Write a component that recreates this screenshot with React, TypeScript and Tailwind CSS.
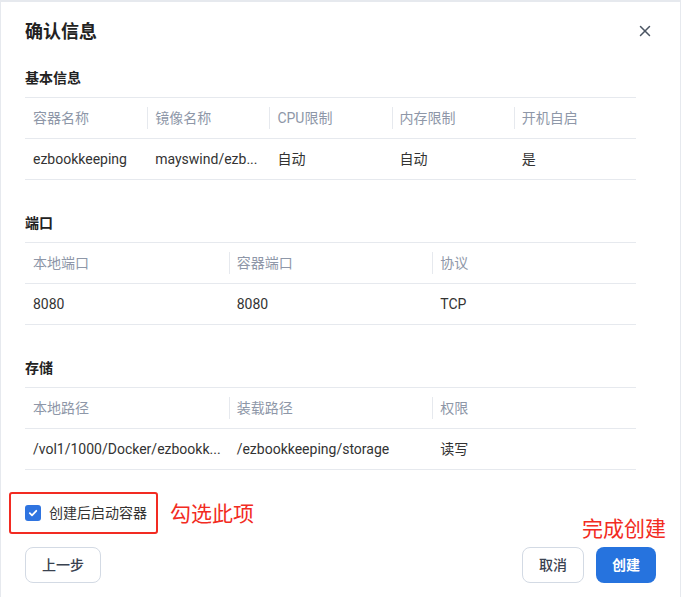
import { X } from "lucide-react";

const font = { fontFamily: 'Roboto, "Noto Sans CJK SC", sans-serif' };

export default function App() {
  return (
    <div
      className="h-[597px] w-[681px] overflow-hidden bg-[#e6e9ee] pt-[2px] px-px"
      style={font}
    >
      <div className="relative h-[595px] bg-white pl-6 pr-6">
        <div className="flex h-[60px] items-center justify-between">
          <h1 className="text-[18px] font-bold leading-[26px] text-[#222]">
            确认信息
          </h1>
          <button className="mr-[2px] mt-[-2px] text-[#4b5563]">
            <X size={18} strokeWidth={2} />
          </button>
        </div>

        <Section
          title="基本信息"
          className="mt-[6px]"
          heads={["容器名称", "镜像名称", "CPU限制", "内存限制", "开机自启"]}
          cells={["ezbookkeeping", "mayswind/ezb...", "自动", "自动", "是"]}
        />
        <Section
          title="端口"
          className="mt-[33px]"
          heads={["本地端口", "容器端口", "协议"]}
          cells={["8080", "8080", "TCP"]}
        />
        <Section
          title="存储"
          className="mt-[33px]"
          heads={["本地路径", "装载路径", "权限"]}
          cells={["/vol1/1000/Docker/ezbookk...", "/ezbookkeeping/storage", "读写"]}
        />

        <div className="mt-[22px] flex items-center">
          <div className="ml-[-16px] flex h-[42px] w-[149px] items-center rounded-[3px] border-2 border-[#f22b22] pl-[14px]">
            <span className="flex h-4 w-4 items-center justify-center rounded-[3px] bg-[#2f74e0]">
              <svg width="10" height="10" viewBox="0 0 10 10" fill="none">
                <path
                  d="M1.8 5.2 L4 7.3 L8.3 2.8"
                  stroke="white"
                  strokeWidth="1.8"
                  strokeLinecap="round"
                  strokeLinejoin="round"
                />
              </svg>
            </span>
            <span className="ml-2 text-[14px] leading-5 text-[#333]">
              创建后启动容器
            </span>
          </div>
          <span className="ml-[12px] mt-[2px] text-[21px] leading-7 text-[#f22b22]">
            勾选此项
          </span>
        </div>

        <span className="absolute right-[14px] top-[513px] text-[21px] leading-7 text-[#f22b22]">
          完成创建
        </span>

        <div className="mt-[13px] flex items-center justify-between">
          <button className="h-9 w-[76px] rounded-lg border border-[#d3dae4] text-[14px] font-medium text-[#3a4250]">
            上一步
          </button>
          <div className="flex gap-3">
            <button className="h-9 w-[62px] rounded-lg border border-[#d3dae4] text-[14px] font-medium text-[#3a4250]">
              取消
            </button>
            <button className="h-9 w-[60px] rounded-lg bg-[#2673de] text-[14px] font-bold text-white">
              创建
            </button>
          </div>
        </div>
      </div>
    </div>
  );
}

function Section({
  title,
  heads,
  cells,
  className,
}: {
  title: string;
  heads: string[];
  cells: string[];
  className: string;
}) {
  const cols = heads.length === 5 ? "grid-cols-5" : "grid-cols-3";
  return (
    <div className={className}>
      <h2 className="h-5 text-[14px] font-bold leading-5 text-[#222]">{title}</h2>
      <div className="mt-[9px] w-[611px] border-t border-[#e6e9ee]">
        <div className={`grid ${cols} h-[41px] border-b border-[#e6e9ee]`}>
          {heads.map((h, i) => (
            <div key={h} className="flex items-center">
              <span
                className={`h-[22px] w-px ${i === 0 ? "bg-transparent" : "bg-[#e6e9ee]"}`}
              />
              <span className="pl-[7px] text-[14px] text-[#8e97a8]">{h}</span>
            </div>
          ))}
        </div>
        <div className={`grid ${cols} h-[41px] border-b border-[#e6e9ee]`}>
          {cells.map((c, i) => (
            <div
              key={i}
              className="flex items-center truncate pl-2 pr-2 text-[14px] text-[#333]"
            >
              {c}
            </div>
          ))}
        </div>
      </div>
    </div>
  );
}
